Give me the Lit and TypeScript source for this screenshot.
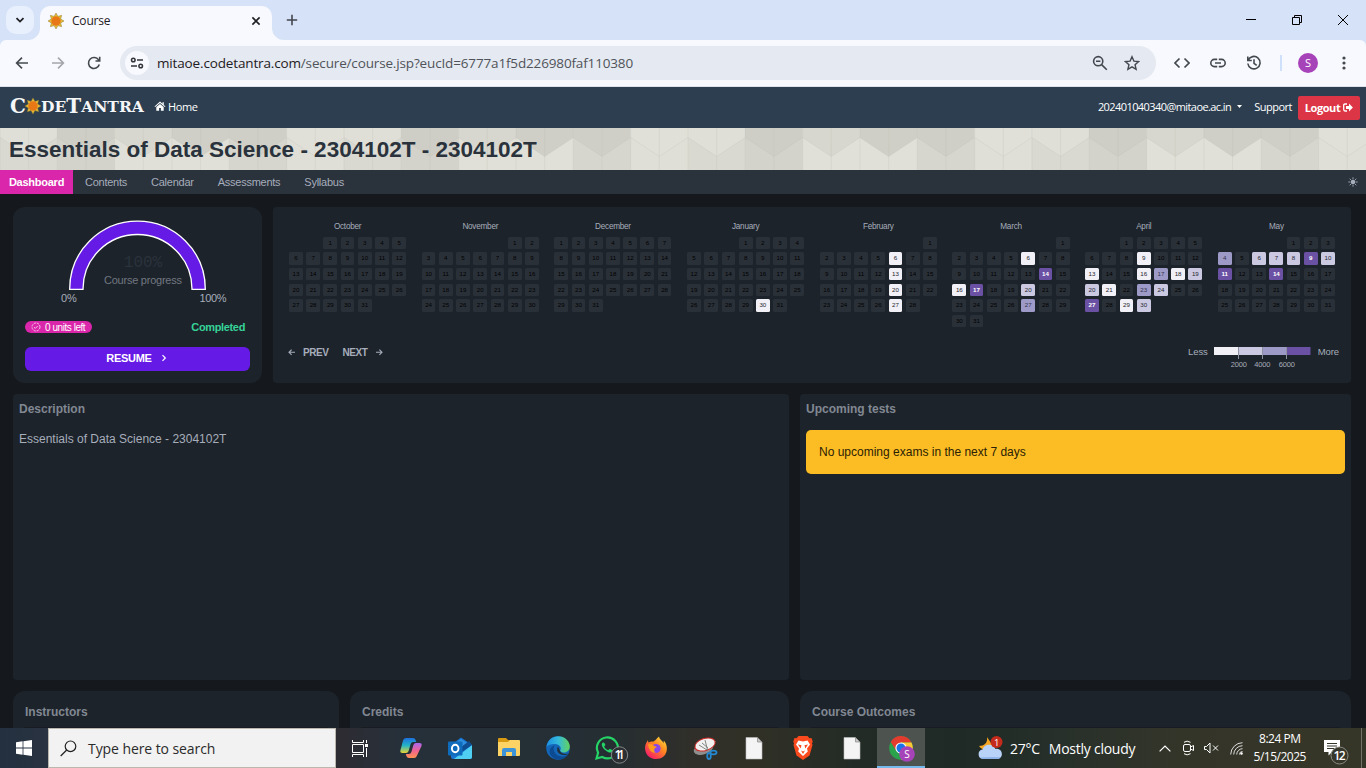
import { LitElement, html, svg, css } from "lit";
import { customElement, property } from "lit/decorators.js";
import { classMap } from "lit/directives/class-map.js";

const sunRays = (n: number, r1: number, r2: number) =>
  Array.from({ length: n * 2 }, (_, i) => {
    const r = i % 2 ? r1 : r2;
    const a = (Math.PI * i) / n - Math.PI / 2;
    return `${(r * Math.cos(a)).toFixed(2)},${(r * Math.sin(a)).toFixed(2)}`;
  }).join(" ");

const sunLogo = (size: number) => html`<svg width=${size} height=${size} viewBox="-8 -8 16 16">
  <polygon points=${sunRays(8, 5, 8)} fill="#e8bd35" stroke="#8d7a32" stroke-width=".5"></polygon>
  <circle r="4.7" fill="#e87716"></circle>
</svg>`;

/* ---------- Browser chrome ---------- */
@customElement("browser-chrome")
class BrowserChrome extends LitElement {
  static styles = css`
    :host { display: block; font-family: "Open Sans", "Noto Sans", sans-serif; color: #1f2023; }
    svg { display: block; flex: none; }
    .strip { height: 40px; background: #d6e2f8; display: flex; align-items: stretch; }
    .search { width: 28px; height: 28px; margin: 6px 0 0 6px; border-radius: 10px; background: #e9f0fd; display: grid; place-items: center; }
    .tab { width: 232px; margin: 6px 0 0 0; border-radius: 10px 10px 0 0; background: #f8f9fe; display: flex; align-items: center; padding-bottom: 5px; box-sizing: border-box; }
    .flare { width: 12px; height: 12px; align-self: flex-end; }
    .flare.left { margin-left: -6px; }
    .fav { margin-left: 8px; }
    .title { font-size: 12px; letter-spacing: -0.2px; margin-left: 8px; flex: 1; }
    .close { margin-right: 11px; }
    .plus { margin: 14px 0 0 2px; }
    .win { margin: 14px 17px 0 auto; display: flex; gap: 34px; }
    .under { background: #d6e2f8; }
    .bar { height: 46px; background: #f8f9fe; border-bottom: 1px solid #dfe2e8; display: flex; align-items: center; border-radius: 6px 6px 0 0; }
    .nav { display: flex; gap: 20px; margin-left: 14px; width: 106px; }
    .omni { width: 1036px; height: 34px; border-radius: 17px; background: #e5e9f1; display: flex; align-items: center; }
    .site { width: 24px; height: 24px; border-radius: 50%; background: #f8f9fe; margin-left: 5px; display: grid; place-items: center; }
    .url { margin-left: 8px; font-size: 13.5px; letter-spacing: -0.15px; flex: 1; white-space: nowrap; }
    .path { color: #50545a; }
    .mag { margin-right: 16px; }
    .star { margin-right: 16px; }
    .ext { display: flex; gap: 20px; margin-left: 18px; }
    .sep { width: 2px; height: 16px; background: #cfe0fa; margin: 0 16px 0 18px; }
    .avatar { width: 20px; height: 20px; border-radius: 50%; background: #a743b9; color: #fff; font-size: 11px; line-height: 20px; text-align: center; margin-right: 24px; }
  `;
  render() {
    return html`
      <div class="strip">
        <div class="search"><svg width="10" height="10" viewBox="0 0 10 10"><path d="M1.5 3.2 5 6.6 8.5 3.2" fill="none" stroke="#1f2023" stroke-width="1.8"></path></svg></div>
        <svg class="flare left" viewBox="0 0 12 12"><path d="M12 0v12H0A12 12 0 0 0 12 0z" fill="#f8f9fe"></path></svg>
        <div class="tab">
          <div class="fav">${sunLogo(16)}</div>
          <span class="title">Course</span>
          <svg class="close" width="10" height="10" viewBox="0 0 10 10"><path d="M1.4 1.4l7.2 7.2M8.600 1.4L1.4 8.6" stroke="#1f2023" stroke-width="1.6"></path></svg>
        </div>
        <svg class="flare" viewBox="0 0 12 12"><path d="M0 0v12h12A12 12 0 0 1 0 0z" fill="#f8f9fe"></path></svg>
        <svg class="plus" width="12" height="12" viewBox="0 0 12 12"><path d="M6 .8v10.400M.8 6h10.400" stroke="#43474e" stroke-width="1.6"></path></svg>
        <div class="win">
          <svg width="12" height="12" viewBox="0 0 12 12"><path d="M1 5.500h10" stroke="#000"></path></svg>
          <svg width="12" height="12" viewBox="0 0 12 12"><path d="M1.500 3.500h7v7h-7zM3.500 3.500v-2h7v7h-2" fill="none" stroke="#000"></path></svg>
          <svg width="12" height="12" viewBox="0 0 12 12"><path d="M1 1l10 10M11 1L1 11" stroke="#000"></path></svg>
        </div>
      </div>
      <div class="under"><div class="bar">
        <div class="nav">
          <svg width="16" height="16" viewBox="0 0 16 16"><path d="M14 8H3M8 2.600 2.600 8 8 13.400" fill="none" stroke="#43494f" stroke-width="1.600"></path></svg>
          <svg width="16" height="16" viewBox="0 0 16 16"><path d="M2 8h11M8 2.600 13.400 8 8 13.400" fill="none" stroke="#a3a5aa" stroke-width="1.600"></path></svg>
          <svg width="16" height="16" viewBox="0 0 16 16"><path d="M13.300 9.500A5.500 5.500 0 1 1 12.600 4.900L13.800 6M13.700 1.800V6H9.500" fill="none" stroke="#43494f" stroke-width="1.600"></path></svg>
        </div>
        <div class="omni">
          <div class="site"><svg width="14" height="14" viewBox="0 0 14 14" fill="none" stroke="#303338" stroke-width="1.500"><circle cx="3.300" cy="4" r="1.800"></circle><path d="M7 4h6M1 10h6"></path><circle cx="10.700" cy="10" r="1.800"></circle></svg></div>
          <span class="url">mitaoe.codetantra.com<span class="path">/secure/course.jsp?eucId=6777a1f5d226980faf110380</span></span>
          <svg class="mag" width="16" height="16" viewBox="0 0 16 16" fill="none" stroke="#43474e" stroke-width="1.600"><circle cx="6.200" cy="6.200" r="4.600"></circle><path d="M9.600 9.600l5.200 5.200M4 6.200h4.400"></path></svg>
          <svg class="star" width="16" height="16" viewBox="0 0 16 16"><path d="M8 1.800l1.900 4.300 4.700.45-3.550 3.100 1.050 4.600L8 11.800l-4.100 2.450 1.050-4.600L1.400 6.550l4.700-.45z" fill="none" stroke="#43474e" stroke-width="1.400"></path></svg>
        </div>
        <div class="ext">
          <svg width="16" height="16" viewBox="0 0 16 16" fill="none" stroke="#43494f" stroke-width="1.700"><path d="M5.500 3.500 1 8l4.500 4.500M10.500 3.500 15 8l-4.500 4.500"></path></svg>
          <svg width="16" height="16" viewBox="0 0 16 16" fill="none" stroke="#43494f" stroke-width="1.600"><path d="M7.200 4.400H4.400a3.600 3.600 0 0 0 0 7.200h2.800M8.800 4.400h2.800a3.600 3.600 0 0 1 0 7.200H8.800M5 8h6"></path></svg>
          <svg width="16" height="16" viewBox="0 0 16 16" fill="none" stroke="#43494f" stroke-width="1.600"><path d="M1.800 1.500v4h4M2.200 5.300A6.200 6.200 0 1 1 1.800 8.500M8 4.300V8.300l2.700 2"></path></svg>
        </div>
        <div class="sep"></div>
        <div class="avatar">S</div>
        <svg width="4" height="16" viewBox="0 0 4 16" fill="#43474e"><circle cx="2" cy="3" r="1.600"></circle><circle cx="2" cy="8" r="1.600"></circle><circle cx="2" cy="13" r="1.600"></circle></svg>
      </div></div>`;
  }
}

/* ---------- Site header ---------- */
const TOP = ["#dfdfd8", "#cecec6", "#d7d7cf", "#cfcfc7", "#cfcfc7", "#e0e0d9"];
const BOTTOM = ["#d9d9d1", "#d3d3cb", "#e0e0d8", "#e0e0d8", "#d6d6ce", "#dfdfd7"];
const CW = 57.33;

@customElement("site-header")
class SiteHeader extends LitElement {
  static styles = css`
    :host { display: block; font-family: "Liberation Sans", Arial, sans-serif; }
    svg { display: block; flex: none; }
    .nav { height: 41px; background: #2c3e50; color: #fff; display: flex; align-items: center; font: 11px "Open Sans", sans-serif; padding-bottom: 3px; box-sizing: border-box; white-space: nowrap; }
    .logo { display: flex; align-items: center; margin-left: 10px; width: 144px; height: 22px; font-family: "DejaVu Serif", serif; font-weight: bold; color: #f5f6f7; }
    .big { font-size: 20px; line-height: 20px; }
    .small { font-size: 15.500px; line-height: 20px; padding-top: 2px; }
    .logo .c { width: 15px; }
    .home { margin-left: 2px; letter-spacing: -0.35px; flex: 1; }
    .mail { letter-spacing: -0.58px; }
    .caret { margin: 0 12px 0 6px; }
    .support { letter-spacing: -0.5px; margin-right: 6px; }
    .logout { width: 62px; height: 24px; margin: 3px 6px 0 0; border-radius: 2px; background: #dc3545; font-weight: bold; display: flex; align-items: center; justify-content: center; gap: 3px; letter-spacing: -0.4px; line-height: 22px; }
    .banner { height: 42px; display: grid; overflow: hidden; }
    .banner > * { grid-area: 1 / 1; }
    h1 { margin: 0; padding-left: 9px; font-size: 22.500px; line-height: 44px; color: #2a323c; white-space: nowrap; z-index: 1; }
    .tabs { height: 24px; background: #2a323c; color: #a6adbb; font-size: 11px; line-height: 24px; display: flex; letter-spacing: -0.25px; }
    .tab { padding: 0 12px; }
    .tab.active { background: #d926aa; color: #fff; font-weight: bold; padding: 0; width: 73px; text-align: center; }
    .theme { margin: 7px 8px 0 auto; }
  `;
  render() {
    return html`
      <div class="nav">
        <div class="logo"><span class="big c">C</span>${sunLogo(16)}<span class="small">DE</span><span class="big">T</span><span class="small">ANTRA</span></div>
        <svg width="12" height="10" viewBox="0 0 11 10" fill="#fff"><path d="M5.500.6 0 5.400l.7.7L5.500 2l4.800 4.100.7-.7L9.300 3.900V1.200H8v1.500zM1.800 6v3.700h2.800V7h1.800v2.700h2.800V6L5.500 2.900z"></path></svg>
        <span class="home">Home</span>
        <span class="mail">202401040340@mitaoe.ac.in</span>
        <svg class="caret" width="5" height="3" viewBox="0 0 5 3"><path d="M0 0h5L2.500 3z" fill="#fff"></path></svg>
        <span class="support">Support</span>
        <span class="logout">Logout<svg width="10" height="9" viewBox="0 0 10 9"><path d="M4 1H2Q.7 1 .7 2.300v4Q.7 8 2 8h2" fill="none" stroke="#fff" stroke-width="1.300"></path><path d="M3 3h3V.6L9.900 4.500 6 8.400V6H3z" fill="#fff"></path></svg></span>
      </div>
      <div class="banner">
        <svg width="1366" height="42">
          ${Array.from({ length: 24 }, (_, i) => {
            const x = i * CW, k = i % 6;
            return svg`<rect x=${x} width=${CW + 0.5} height="42" fill=${BOTTOM[k]}></rect>
              <path d="M${x} 0V9.500l${CW / 2} 19 ${CW / 2} -19V0z" fill=${TOP[k]}></path>
              <path d="M${x} 0V42M${x + CW / 2} 0V42M${x} 9.500l${CW / 2} 19 ${CW / 2} -19" fill="none" stroke="#bcbcb3" stroke-width=".6" opacity=".4"></path>`;
          })}
        </svg>
        <h1>Essentials of Data Science - 2304102T - 2304102T</h1>
      </div>
      <div class="tabs">
        <span class="tab active">Dashboard</span>
        <span class="tab">Contents</span><span class="tab">Calendar</span><span class="tab">Assessments</span><span class="tab">Syllabus</span>
        <svg class="theme" width="10" height="10" viewBox="0 0 10 10"><circle cx="5" cy="5" r="2.300" fill="#a6adbb"></circle><path d="M5 .3v2M5 7.700v2M.3 5h2M7.700 5h2M1.700 1.700 3 3M7 7l1.300 1.300M8.300 1.700 7 3M3 7 1.700 8.300" stroke="#a6adbb" stroke-width=".9"></path></svg>
      </div>`;
  }
}

/* ---------- Activity heat map ---------- */
interface Month { name: string; start: number; days: number; levels: Record<number, number>; }
const MONTHS: Month[] = [
  { name: "October", start: 2, days: 31, levels: {} },
  { name: "November", start: 5, days: 30, levels: {} },
  { name: "December", start: 0, days: 31, levels: {} },
  { name: "January", start: 3, days: 31, levels: { 30: 1 } },
  { name: "February", start: 6, days: 28, levels: { 6: 1, 13: 1, 20: 1, 27: 1 } },
  { name: "March", start: 6, days: 31, levels: { 6: 1, 14: 4, 16: 1, 17: 4, 20: 2, 27: 3 } },
  { name: "April", start: 2, days: 30, levels: { 9: 1, 13: 1, 16: 1, 17: 3, 18: 1, 19: 2, 20: 2, 21: 1, 23: 3, 24: 2, 27: 4, 29: 1, 30: 2 } },
  { name: "May", start: 4, days: 31, levels: { 4: 3, 6: 2, 7: 2, 8: 2, 9: 4, 10: 2, 11: 4, 14: 4 } },
];

@customElement("heat-month")
class HeatMonth extends LitElement {
  @property({ attribute: false }) month!: Month;
  static styles = css`
    :host { display: block; width: 117.2px; }
    .name { font-size: 8.200px; line-height: 10px; text-align: center; color: #a6adbb; margin-bottom: 4.500px; padding-top: 1px; letter-spacing: -0.250px; }
    .days { display: grid; grid-template-columns: repeat(7, 13.8px); column-gap: 3.430px; grid-auto-rows: 12.300px; row-gap: 3.450px; }
    .day { background: #2a3038; color: #000; border-radius: 1.500px; font-size: 6.200px; line-height: 12.500px; text-align: center; }
    .l1 { background: #f2f0f7; color: #1c1c28; }
    .l2 { background: #cbc9e2; color: #24242e; }
    .l3 { background: #9e9ac8; color: #33334a; }
    .l4 { background: #6a51a3; color: #fff; font-weight: bold; }
  `;
  render() {
    const m = this.month;
    return html`<div class="name">${m.name}</div>
      <div class="days">
        ${Array.from({ length: m.start }, () => html`<span></span>`)}
        ${Array.from({ length: m.days }, (_, i) => {
          const l = m.levels[i + 1] ?? 0;
          return html`<span class=${classMap({ day: true, l1: l === 1, l2: l === 2, l3: l === 3, l4: l === 4 })}>${i + 1}</span>`;
        })}
      </div>`;
  }
}

/* ---------- Dashboard ---------- */
@customElement("course-dashboard")
class CourseDashboard extends LitElement {
  static styles = css`
    :host { display: grid; height: 534px; overflow: hidden; background: #15191e; box-sizing: border-box; padding: 13px 15px 0 13px; grid-template-rows: 176px 286px 60px; row-gap: 11px; font-family: "Liberation Sans", Arial, sans-serif; color: #a6adbb; font-size: 12px; white-space: nowrap; }
    svg { display: block; flex: none; }
    .row { display: grid; column-gap: 11px; }
    .r1 { grid-template-columns: 249px 1078px; }
    .r2 { grid-template-columns: 776px 551px; }
    .r3 { grid-template-columns: 326px 439px 551px; }
    .card { background: #1d232a; border-radius: 4px; box-sizing: border-box; }
    .round { border-radius: 12px; }
    .progress { padding: 11px 12px 0; display: flex; flex-direction: column; font-size: 11px; }
    .gauge { align-self: center; }
    .stat { display: flex; justify-content: space-between; align-items: center; height: 14px; margin-top: 12px; padding-right: 5px; }
    .badge { background: #d926aa; color: #fff; height: 12px; width: 67px; border-radius: 6px; font-size: 10px; display: flex; align-items: center; gap: 4px; padding-left: 6px; box-sizing: border-box; letter-spacing: -0.450px; }
    .done { color: #36d399; font-weight: bold; letter-spacing: -0.350px; }
    .resume { margin-top: 13px; height: 24px; border-radius: 6px; background: #661ae6; color: #fff; font-weight: bold; display: flex; align-items: center; justify-content: center; gap: 9px; padding: 0 2px 2px 0; box-sizing: border-box; letter-spacing: -0.300px; }
    .heat { padding: 14px 16px 0 16px; display: flex; flex-direction: column; }
    .months { display: flex; justify-content: space-between; height: 110px; }
    .foot { display: flex; align-items: center; margin-top: 8px; height: 26px; font-size: 10px; font-weight: bold; margin-left: -1px; letter-spacing: -0.450px; }
    .prev { margin: 0 14px 0 7px; }
    .next { margin-right: 8px; }
    .legend { margin: 12px -4px 0 auto; display: flex; font-size: 9.500px; font-weight: normal; line-height: 10px; letter-spacing: -0.100px; }
    .less { margin-right: 6px; }
    .more { margin-left: 7px; }
    h2 { margin: 0; font-size: 12px; line-height: 14px; color: #818893; font-weight: bold; }
    .pad { padding: 8px 6px 0; }
    .pad h2 { margin-bottom: 14px; }
    .text { line-height: 18px; }
    .alert { height: 44px; border-radius: 5px; background: #fbbd23; color: #2b2107; line-height: 44px; padding-left: 13px; }
    .foot-card { padding: 14px 12px 0; }
    .inner { height: 20px; margin: 8px -3px 0; background: #181c22; border-radius: 4px; }
  `;
  render() {
    return html`
      <div class="row r1">
        <section class="card round progress">
          <svg class="gauge" width="225" height="90" viewBox="25 218 225 90" font-family="Liberation Sans" font-size="11">
            <path d="M69.700 289.300V289A67.800 67.800 0 0 1 205.300 289V289.300H192V289A54.500 54.500 0 0 0 83 289V289.300z" fill="#661ae6" stroke="#fff" stroke-width="1.300"></path>
            <text x="143" y="266.500" text-anchor="middle" font-family="Liberation Mono" font-size="16" fill="#2a323c">100%</text>
            <text x="104" y="284" textLength="78" fill="#717781">Course progress</text>
            <text x="61" y="302" fill="#a6adbb">0%</text>
            <text x="199.500" y="302" fill="#a6adbb" textLength="27">100%</text>
          </svg>
          <div class="stat">
            <span class="badge"><svg width="10" height="10" viewBox="0 0 10 10" fill="none" stroke="#f8c6ea"><circle cx="5" cy="5" r="4" stroke-dasharray="2.200 1"></circle><path d="M3 5.200l1.300 1.200 2.500-2.500"></path></svg>0 units left</span>
            <span class="done">Completed</span>
          </div>
          <div class="resume"><span>RESUME</span><svg width="6" height="8" viewBox="0 0 6 8"><path d="M1.500 1.200 4.300 4 1.500 6.800" fill="none" stroke="#fff" stroke-width="1.200"></path></svg></div>
        </section>
        <section class="card heat">
          <div class="months">${MONTHS.map((m) => html`<heat-month .month=${m}></heat-month>`)}</div>
          <div class="foot">
            <svg width="8" height="8" viewBox="0 0 8 8" fill="none" stroke="#a6adbb" stroke-width="1.100"><path d="M7 4.300H1M3.600 1.700 1 4.300l2.600 2.600"></path></svg>
            <span class="prev">PREV</span><span class="next">NEXT</span>
            <svg width="8" height="8" viewBox="0 0 8 8" fill="none" stroke="#a6adbb" stroke-width="1.100"><path d="M1 4.300h6M4.400 1.700 7 4.300 4.400 6.900"></path></svg>
            <div class="legend">
              <span class="less">Less</span>
              <svg width="97" height="22" viewBox="0 0 97 22" font-family="Liberation Sans" font-size="7.500" text-anchor="middle" fill="#a6adbb">
                <rect width="24.500" height="8" fill="#f2f0f7"></rect><rect x="24.500" width="24" height="8" fill="#cbc9e2"></rect><rect x="48.500" width="24" height="8" fill="#9e9ac8"></rect><rect x="72.500" width="24" height="8" fill="#6a51a3"></rect>
                <path d="M24.500 0v12M48.500 0v12M72.500 0v12" stroke="#8d93a0"></path>
                <text x="24.800" y="19.500">2000</text><text x="48.300" y="19.500">4000</text><text x="72.800" y="19.500">6000</text>
              </svg>
              <span class="more">More</span>
            </div>
          </div>
        </section>
      </div>
      <div class="row r2">
        <section class="card pad"><h2>Description</h2><div class="text">Essentials of Data Science - 2304102T</div></section>
        <section class="card pad"><h2>Upcoming tests</h2><div class="alert">No upcoming exams in the next 7 days</div></section>
      </div>
      <div class="row r3">
        ${["Instructors", "Credits", "Course Outcomes"].map((t) => html`<section class="card round foot-card"><h2>${t}</h2><div class="inner"></div></section>`)}
      </div>`;
  }
}

/* ---------- Windows taskbar ---------- */
const page = svg`<path d="M4 1.500h11.500L20 6v17H4z" fill="#f4f4f4" stroke="#bdbdbd" stroke-width=".6"></path><path d="M15.500 1.500V6H20z" fill="#c9c9c9" stroke="#777" stroke-width=".6"></path>`;
const APPS = [
  svg`<g fill="none" stroke="#fff"><path d="M4.500 8.500h11v8h-11zM4.500 4v2.500h11V4M4.500 21v-2.500h11V21M18.500 4v3M18.500 12v9"></path></g><rect x="17" y="8" width="3" height="3" fill="#fff"></rect>`,
  svg`<defs><linearGradient id="cp1" x2="0" y2="1"><stop stop-color="#1e6fe0"></stop><stop offset=".5" stop-color="#25b4c6"></stop><stop offset="1" stop-color="#e7d535"></stop></linearGradient><linearGradient id="cp2" x2="0" y2="1"><stop stop-color="#a968f0"></stop><stop offset=".5" stop-color="#f06292"></stop><stop offset="1" stop-color="#ff9350"></stop></linearGradient></defs>
    <path d="M7 2h7q2 0 2.600 2l.6 2h-3q-2 0-2.600 2l-2 7q-.6 2-2.600 2H3.500Q.6 17 1.500 14l2.500-9.500Q4.800 2 7 2z" fill="url(#cp1)"></path>
    <path d="M17 22h-7q-2 0-2.600-2l-.6-2h3q2 0 2.600-2l2-7q.6-2 2.600-2h3.500q2.900 0 2 3L18 19.500Q17.200 22 15 22z" fill="url(#cp2)"></path>`,
  svg`<path d="M3 9 13 1.500 24 9v12q0 2-2 2H5q-2 0-2-2z" fill="#1674cf"></path><path d="M6 8 13 3l8 5-8 6z" fill="#2f8fe0"></path><path d="M24 9v12q0 2-2 2H6z" fill="#4fd0f3"></path><path d="M24 9 12 17v-5l9-7z" fill="#0e4d92"></path><rect y="5.500" width="14.500" height="14" rx="1" fill="#0f6cbd"></rect><ellipse cx="7.200" cy="12.500" rx="3.300" ry="3.700" fill="none" stroke="#fff" stroke-width="1.900"></ellipse>`,
  svg`<path d="M1 3q0-1 1-1h7l2 2h11v4H1z" fill="#d99a13"></path><path d="M1 6h10l2-2h9q1 0 1 1v14q0 1-1 1H1z" fill="#fcd364"></path><path d="M5 20v-6q0-2 2-2h10q2 0 2 2v6h-4v-4H9v4z" fill="#3c93d8"></path>`,
  svg`<defs><linearGradient id="ed1"><stop stop-color="#1b8fe0"></stop><stop offset=".5" stop-color="#35b9dc"></stop><stop offset="1" stop-color="#62d35a"></stop></linearGradient></defs><circle cx="12" cy="12" r="11.800" fill="#1466b8"></circle><path d="M.5 11C1.500 4 6.500.2 12 .2c7 0 11.800 5 11.800 10.300 0 3.500-2.600 6-6 6-2.800 0-4.300-1.100-3.500-2.200 1.300-1.800.2-5.600-4-6.100C6 7.800 2 9 .5 11z" fill="url(#ed1)"></path><path d="M8.500 9.500c-2.500 4 .5 10.500 7 11 2.500.2 5-1 6.500-2.600C18 25 9 25.500 4.500 19 2 14 5 10.500 8.500 9.500z" fill="#0c4a92"></path><path d="M12 10.500c-2 3.500-.5 7.500 5 8.500 2.200.3 4-.3 5.500-1.500-2.500 1.200-7.500.2-8.500-2.700z" fill="#22303a"></path>`,
  svg`<path d="M1.500 22.500l1.600-5.800A10.500 10.500 0 1 1 7.200 21z" fill="none" stroke="#25d366" stroke-width="2.200"></path><path d="M8 6.500c-2 1-1.500 4 1.500 7s6.500 4 7.700 2.200c.7-1.100.4-1.600-.3-2l-2.200-1-1.500 1.500c-2-.7-3.300-2-4-3.700l1.200-1.500L9.300 6.700z" fill="#25d366"></path><circle cx="24.500" cy="19" r="8.200" fill="#2b2f31" stroke="#858888"></circle><text x="24.500" y="23.300" font-family="Open Sans" font-size="12" font-weight="600" text-anchor="middle" fill="#fff" textLength="10">11</text>`,
  svg`<defs><linearGradient id="ff" x1="1" x2=".2" y2="1"><stop stop-color="#fff04a"></stop><stop offset=".45" stop-color="#ff8a1e"></stop><stop offset="1" stop-color="#f5156c"></stop></linearGradient></defs><path d="M15 .5c.5 3 3.500 4 4.500 6.500q.5-1 .2-2.500C25 9.500 24.500 23 12 23 2 23-.5 13 2 7.500q.8-2 2-3.500 0 1.500.6 2.500Q6.500 5 9 5.500c1.500.2 3-2.500 6-5z" fill="url(#ff)"></path><circle cx="12" cy="12.500" r="4.600" fill="#8a46e8"></circle><path d="M4 8.500c3-1 5 0 6 1.500q3 .3 2.500 1.500C10 12 9 15.500 12 16.500c-5 1-7-3-8-8z" fill="#ff9a1f"></path>`,
  svg`<ellipse cx="10.500" cy="13" rx="10" ry="5.500" fill="#8e8e8e" transform="rotate(-18 10 13)"></ellipse><ellipse cx="12" cy="8.500" rx="10.500" ry="6" fill="#f1f1f1" stroke="#d22c2c" transform="rotate(-18 12 8.500)"></ellipse><path d="M6 9l8 5M12 4l2.500 10M9 7l6 5" stroke="#777" stroke-width=".9"></path><g fill="none" stroke="#2587cf" stroke-width="1.800"><ellipse cx="16" cy="20" rx="1.800" ry="3"></ellipse><ellipse cx="20.500" cy="16.500" rx="3" ry="1.800"></ellipse></g>`,
  page,
  svg`<path d="M7.500 0h9l2 2.300 2-.2 1.200 3.400-.7 2 .5 1.500-3 10.500L12 24l-6.500-4.500L2.500 9 3 7.500l-.7-2 1.200-3.400 2 .2z" fill="#fb4a1e"></path><path d="M7.500 4.500l4.500 1 4.500-1 2.500 4-3 4 .8 3L12 20l-4.800-4.500.8-3-3-4z" fill="#fff"></path><path d="M7 8.500l3.500.8-.8 3.200zM17 8.500l-3.500.8.8 3.200zM10 14.500l2 1 2-1-2 3.500z" fill="#fb4a1e"></path>`,
  page,
  svg`<circle cx="12" cy="12" r="11.800" fill="#2ba24c"></circle><path d="M1.800 6A11.800 11.800 0 0 1 22.500 6.500H12L7 14.500z" fill="#e33b2e"></path><path d="M12 6.500h10.500A11.800 11.800 0 0 1 12 23.800l5-9z" fill="#fcc934"></path><circle cx="12" cy="12" r="5.600" fill="#fff"></circle><circle cx="12" cy="12" r="4.500" fill="#1a73e8"></circle><circle cx="18" cy="18" r="7.800" fill="#a743b9"></circle><text x="18" y="21.700" font-family="Open Sans" font-size="10" text-anchor="middle" fill="#fff">S</text>`,
];

@customElement("task-bar")
class TaskBar extends LitElement {
  static styles = css`
    :host { display: flex; height: 40px; color: #fff; font-family: "Open Sans", "Noto Sans", sans-serif; background: linear-gradient(90deg, #24303f 0, #293342 48px, #2d2c33 345px, #26303a 400px, #242e33 600px, #312f29 700px, #303026 760px, #222b26 860px, #1f2a26 960px, #27302a 1060px, #343529 1180px, #363628 1366px); white-space: nowrap; }
    svg { display: block; flex: none; overflow: visible; }
    .start { width: 48px; display: grid; place-items: center; }
    .search { width: 288px; box-sizing: border-box; background: #f2f2f2; border: 1px solid #bbb6b0; color: #2b2b2b; display: flex; align-items: center; font-size: 14px; padding-left: 11px; gap: 11px; letter-spacing: -0.080px; }
    .app { width: 48px; margin-right: 1px; display: grid; place-items: center; box-sizing: border-box; }
    .first { margin-right: 3px; }
    .active { background: #4d5450; box-shadow: inset 0 -2px #76b9ed; }
    .weather { display: flex; align-items: center; margin-left: 52px; font-size: 14px; letter-spacing: -0.250px; }
    .temp { margin: 0 9px 0 7px; }
    .tray { display: flex; align-items: center; margin-left: 24px; gap: 11px; }
    .clock { font-size: 12px; line-height: 18px; text-align: center; letter-spacing: -0.500px; margin-left: 10px; width: 53px; display: flex; flex-direction: column; align-items: center; padding-top: 2px; }
    .notes { margin: 7px 0 0 18px; }
    .speaker { margin-left: -2px; }
    .peek { margin-left: auto; width: 4px; border-left: 1px solid #73736a; }
  `;
  render() {
    return html`
      <div class="start"><svg width="16" height="16" viewBox="0 0 16 16" fill="#fff"><path d="M0 2.200 6.600 1.300v6.300H0zM7.400 1.200 16 0v7.600H7.400zM0 8.400h6.600v6.300L0 13.800zM7.400 8.400H16V16l-8.600-1.200z"></path></svg></div>
      <div class="search"><svg width="17" height="17" viewBox="0 0 17 17" fill="none" stroke="#222" stroke-width="1.200"><circle cx="10.500" cy="6.300" r="5.300"></circle><path d="M6.700 10 .7 16"></path></svg>Type here to search</div>
      ${APPS.map((a, i) => html`<div class=${classMap({ app: true, first: i === 0, active: i === 11 })}><svg width="24" height="24" viewBox="0 0 24 24">${a}</svg></div>`)}
      <div class="weather">
        <svg width="25" height="24" viewBox="0 0 25 24"><path d="M9 1c1 6-3 9-8 9 3 5 12 6 14 0z" fill="#f5a623"></path><path d="M5 23a4.800 4.800 0 0 1-.5-9.500A7 7 0 0 1 17.500 13 5 5 0 0 1 20 23z" fill="#b9d2f7"></path><path d="M5 23a4.600 4.600 0 0 1-3-1.500q10-1 20.500-.3A5 5 0 0 1 20 23z" fill="#8fb3ec"></path><circle cx="18.500" cy="6" r="6" fill="#c42b1c"></circle><text x="18.500" y="9.500" font-family="Open Sans" font-size="9.500" text-anchor="middle" fill="#fff">1</text></svg>
        <span class="temp">27°C</span><span>Mostly cloudy</span>
      </div>
      <div class="tray">
        <svg width="12" height="7" viewBox="0 0 12 7"><path d="M.6 6.400 6 1l5.400 5.400" fill="none" stroke="#fff" stroke-width="1.200"></path></svg>
        <svg width="13" height="16" viewBox="0 0 13 16" fill="none" stroke="#fff"><rect x="1.500" y="4.500" width="7" height="7" rx="1.500"></rect><path d="M8.500 7l3-1.500v5L8.500 9M2 2.300q3-2.300 6.500 0M2 13.700q3 2.300 6.500 0"></path></svg>
        <svg class="speaker" width="15" height="12" viewBox="0 0 15 12" fill="none" stroke="#fff"><path d="M.5 4.500h2L6 1v10L2.500 7.500h-2zM9 3.500l5 5M14 3.500l-5 5"></path></svg>
        <svg width="13" height="13" viewBox="0 0 13 13" fill="none" stroke="#ddd"><path d="M.7 12.500A12 12 0 0 1 12.500.7M3.700 12.500a9 9 0 0 1 8.800-8.800M6.700 12.500a6 6 0 0 1 5.800-5.800M9.500 12.500a3 3 0 0 1 3-3"></path><circle cx="11.500" cy="11.500" r="1" fill="#fff"></circle></svg>
      </div>
      <div class="clock"><span>8:24 PM</span><span>5/15/2025</span></div>
      <svg class="notes" width="26" height="28" viewBox="0 0 26 28"><path d="M0 5h16v12H8l-3.500 3.500V17H0z" fill="#fff"></path><path d="M3 8.500h10M3 11h10M3 13.500h7" stroke="#36362b"></path><circle cx="15.500" cy="20.500" r="8.500" fill="#36362b" stroke="#8b8b83"></circle><text x="15.500" y="24.700" font-family="Open Sans" font-size="12" font-weight="600" text-anchor="middle" fill="#fff" textLength="12">12</text></svg>
      <div class="peek"></div>`;
  }
}

@customElement("app-root")
class AppRoot extends LitElement {
  static styles = css`
    :host { display: flex; flex-direction: column; width: 1366px; height: 768px; overflow: hidden; }
  `;
  render() {
    return html`<browser-chrome></browser-chrome><site-header></site-header><course-dashboard></course-dashboard><task-bar></task-bar>`;
  }
}
